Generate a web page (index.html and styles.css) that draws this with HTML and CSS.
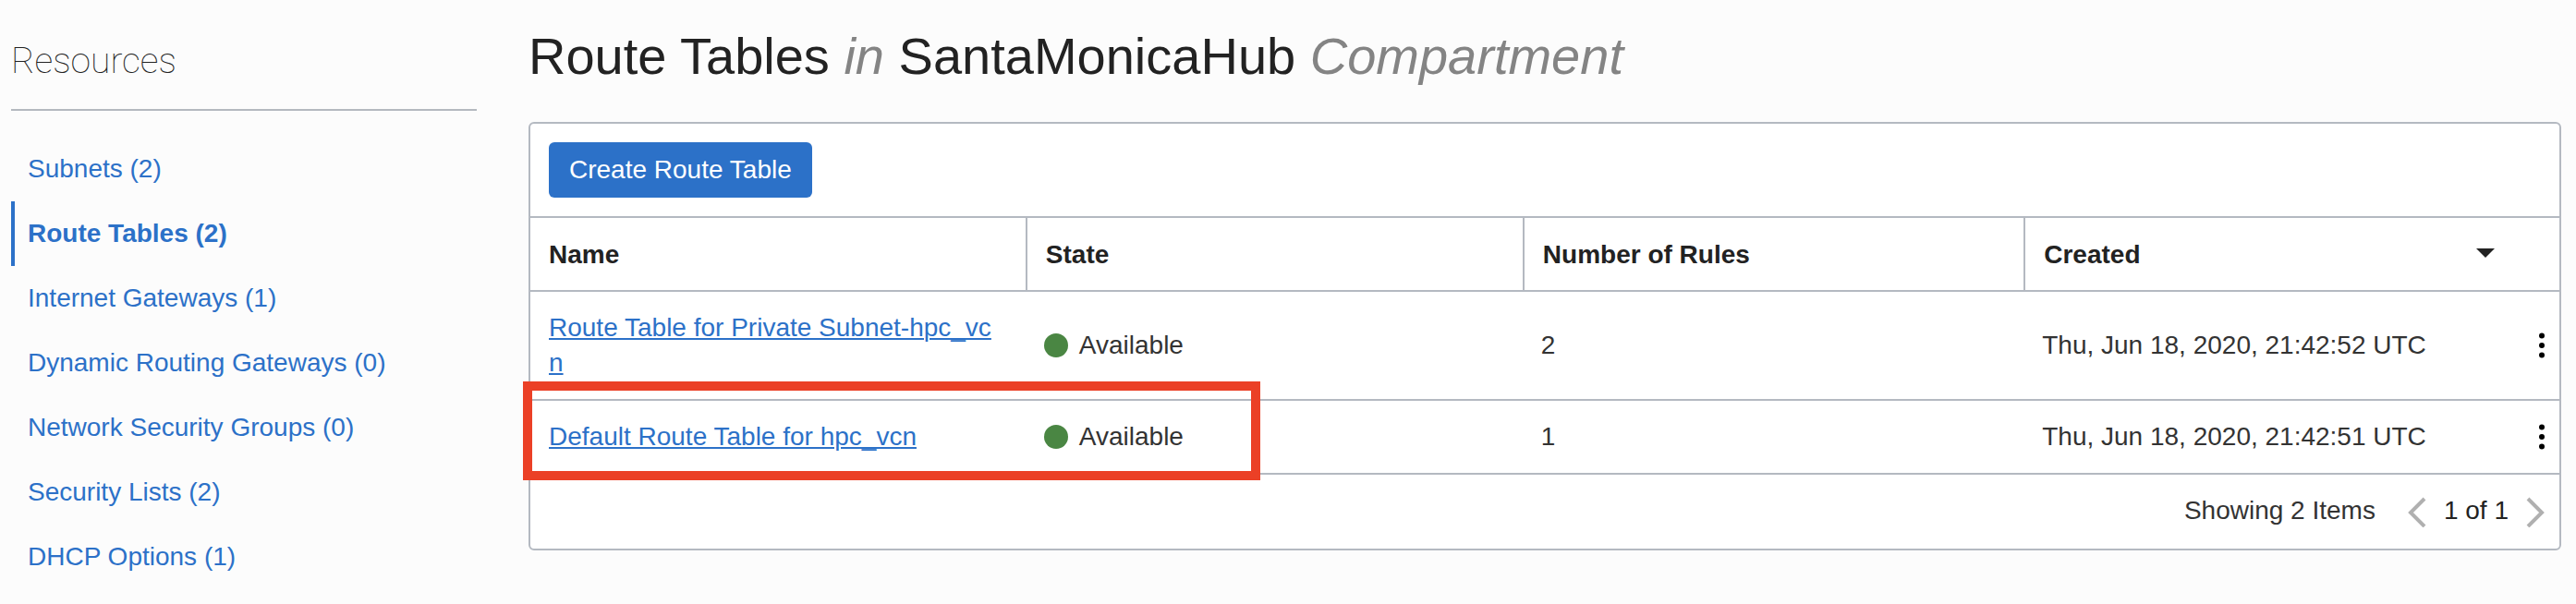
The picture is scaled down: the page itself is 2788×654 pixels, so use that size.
FILE: index.html
```html
<!DOCTYPE html>
<html lang="en">
<head>
<meta charset="utf-8">
<title>Route Tables</title>
<link rel="stylesheet" href="styles.css">
</head>
<body>
<div class="page">
  <aside class="sidebar">
    <h2 class="sidebar-title">Resources</h2>
    <nav class="resource-nav" aria-label="Resources">
      <a class="resource-link" href="#subnets">Subnets (2)</a>
      <a class="resource-link is-active" href="#route-tables" aria-current="page">Route Tables (2)</a>
      <a class="resource-link" href="#internet-gateways">Internet Gateways (1)</a>
      <a class="resource-link" href="#dynamic-routing-gateways">Dynamic Routing Gateways (0)</a>
      <a class="resource-link" href="#network-security-groups">Network Security Groups (0)</a>
      <a class="resource-link" href="#security-lists">Security Lists (2)</a>
      <a class="resource-link" href="#dhcp-options">DHCP Options (1)</a>
    </nav>
  </aside>
  <main class="content">
    <h1 class="title">Route Tables <em class="title-note">in</em> SantaMonicaHub <em class="title-note">Compartment</em></h1>
    <section class="panel">
      <div class="toolbar">
        <button class="create-button" type="button">Create Route Table</button>
      </div>
      <table class="route-table">
        <colgroup>
          <col class="col-name">
          <col class="col-state">
          <col class="col-rules">
          <col>
          <col class="col-menu">
        </colgroup>
        <thead>
          <tr>
            <th scope="col">Name</th>
            <th scope="col">State</th>
            <th scope="col">Number of Rules</th>
            <th scope="col" aria-sort="descending">
              <div class="sort-header">
                <span>Created</span>
                <svg class="sort-icon" width="20" height="14" viewBox="0 0 20 14" aria-hidden="true"><path d="M0 0h20L10 10z"/></svg>
              </div>
            </th>
            <td class="menu-cell"></td>
          </tr>
        </thead>
        <tbody>
          <tr>
            <td class="name-cell"><a class="name-link" href="#private-subnet">Route Table for Private Subnet-hpc_vcn</a></td>
            <td><div class="state"><span class="state-dot"></span>Available</div></td>
            <td>2</td>
            <td>Thu, Jun 18, 2020, 21:42:52 UTC</td>
            <td class="menu-cell">
              <button class="menu-button" type="button" aria-label="Actions"><svg class="menu-icon" width="6" height="28" viewBox="0 0 6 28" aria-hidden="true"><circle cx="3" cy="3.5" r="3"/><circle cx="3" cy="14" r="3"/><circle cx="3" cy="24.5" r="3"/></svg></button>
            </td>
          </tr>
          <tr>
            <td class="name-cell"><a class="name-link" href="#default">Default Route Table for hpc_vcn</a><span class="highlight"></span></td>
            <td><div class="state"><span class="state-dot"></span>Available</div></td>
            <td>1</td>
            <td>Thu, Jun 18, 2020, 21:42:51 UTC</td>
            <td class="menu-cell">
              <button class="menu-button" type="button" aria-label="Actions"><svg class="menu-icon" width="6" height="28" viewBox="0 0 6 28" aria-hidden="true"><circle cx="3" cy="3.5" r="3"/><circle cx="3" cy="14" r="3"/><circle cx="3" cy="24.5" r="3"/></svg></button>
            </td>
          </tr>
        </tbody>
      </table>
      <footer class="pager">
        <span class="pager-count">Showing 2 Items</span>
        <button class="pager-button" type="button" aria-label="Previous page"><svg class="pager-icon" width="20" height="36" viewBox="0 0 20 36" aria-hidden="true"><path d="M18 5L3 20L18 35"/></svg></button>
        <span class="pager-page">1 of 1</span>
        <button class="pager-button" type="button" aria-label="Next page"><svg class="pager-icon" width="20" height="36" viewBox="0 0 20 36" aria-hidden="true"><path d="M2 5L17 20L2 35"/></svg></button>
      </footer>
    </section>
  </main>
</div>
</body>
</html>
```

FILE: styles.css
```css
* {
  box-sizing: border-box;
}

body {
  margin: 0;
  background: #fcfcfc;
  color: #333;
  font-family: "Liberation Sans", Arial, sans-serif;
  font-size: 28px;
  line-height: 38px;
}

button {
  border: 0;
  padding: 0;
  background: none;
  color: inherit;
  font: inherit;
}

svg {
  display: block;
}

.page {
  display: grid;
  grid-template-columns: 504px minmax(0, 1fr);
  column-gap: 56px;
  padding: 0 16px 40px 12px;
}

.sidebar-title {
  margin: 0;
  padding: 42px 0 28px;
  border-bottom: 2px solid #b4b9bf;
  color: #222;
  font-family: Roboto, "Liberation Sans", sans-serif;
  font-size: 39px;
  font-weight: 100;
  line-height: 48px;
}

.resource-nav {
  display: flex;
  flex-direction: column;
  padding-top: 28px;
}

.resource-link {
  padding: 16px 14px;
  border-left: 4px solid transparent;
  color: #2c71c8;
  text-decoration: none;
}

.resource-link.is-active {
  border-left-color: #2c71c8;
  font-weight: 700;
}

.title {
  margin: 0;
  padding: 29px 0 39px;
  color: #222;
  font-size: 56px;
  font-weight: 400;
  line-height: 64px;
}

.title-note {
  color: #848484;
}

.panel {
  border: 2px solid #b4b9c1;
  border-radius: 6px;
  background: #fff;
}

.toolbar {
  padding: 20px;
}

.create-button {
  display: block;
  height: 60px;
  padding: 0 22px;
  border-radius: 6px;
  background: #2c71c8;
  color: #fff;
}

.route-table {
  width: 100%;
  border-spacing: 0;
  table-layout: fixed;
}

.col-name {
  width: 24.4%;
}

.col-state {
  width: 24.5%;
}

.col-rules {
  width: 24.7%;
}

.col-menu {
  width: 38px;
}

.route-table th,
.route-table td {
  padding: 20px;
  border-top: 2px solid #b4b9c1;
  text-align: left;
  vertical-align: middle;
}

.route-table th {
  padding-top: 21px;
  padding-bottom: 19px;
  color: #222;
  font-weight: 700;
}

.route-table th + th {
  border-left: 2px solid #b4b9c1;
}

.route-table .name-cell {
  position: relative;
  padding-right: 24px;
  word-break: break-all;
}

.route-table .menu-cell {
  padding: 0;
}

.name-link {
  color: #2c71c8;
  text-decoration-thickness: 2px;
  text-underline-offset: 2px;
}

.highlight {
  position: absolute;
  top: -21px;
  bottom: -8px;
  left: -8px;
  z-index: 1;
  width: 149%;
  border: 10px solid #eb4026;
  pointer-events: none;
}

.sort-header {
  display: flex;
  align-items: center;
  justify-content: space-between;
  padding-right: 12px;
}

.sort-icon {
  fill: #222;
}

.state {
  display: flex;
  align-items: center;
  gap: 12px;
}

.state-dot {
  width: 26px;
  height: 26px;
  border-radius: 50%;
  background: #4a8643;
}

.menu-button {
  display: block;
  margin: 0 auto;
}

.menu-icon {
  fill: #000;
}

.pager {
  display: flex;
  align-items: center;
  justify-content: flex-end;
  gap: 19px;
  padding: 20px 16px 22px;
  border-top: 2px solid #b4b9c1;
}

.pager-count {
  padding-right: 16px;
}

.pager-page {
  color: #222;
}

.pager-icon {
  fill: none;
  stroke: #b0b0b0;
  stroke-width: 4;
}
```
